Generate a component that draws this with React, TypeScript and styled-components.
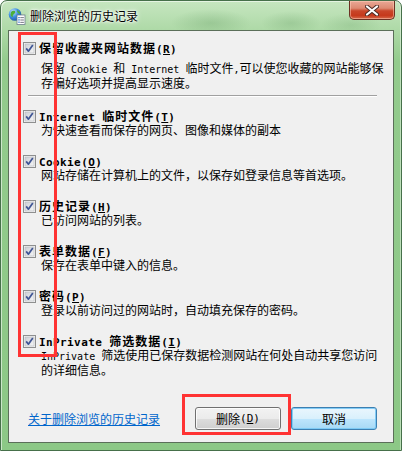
import React from "react";
import styled, { createGlobalStyle } from "styled-components";

const GlobalStyle = createGlobalStyle`
  html, body { margin: 0; padding: 0; width: 402px; height: 451px; overflow: hidden; background: #fff; }
  body { font-family: "Noto Sans CJK SC", sans-serif; }
  * { box-sizing: border-box; }
`;

const Window = styled.div`
  width: 402px;
  height: 451px;
  display: flex;
  flex-direction: column;
  border: 1px solid #46704a;
  border-radius: 7px 7px 0 0;
  background:
    radial-gradient(ellipse 40px 14px at 210px 22px, rgba(80, 140, 80, 0.25), transparent),
    radial-gradient(ellipse 30px 12px at 290px 22px, rgba(80, 140, 80, 0.22), transparent),
    radial-gradient(ellipse 30px 12px at 350px 24px, rgba(80, 140, 80, 0.18), transparent),
    linear-gradient(to bottom, #c6e6c0 0px, #add9a6 30px, #93cb8d 60px, #8cc886 100%);
  box-shadow: inset 1px 1px 0 rgba(255, 255, 255, 0.55), inset -1px 0 0 rgba(255, 255, 255, 0.4);
`;

const TitleBar = styled.div`
  height: 29px;
  display: flex;
  align-items: flex-start;
  padding-left: 7px;
`;

const TitleIcon = styled.svg`
  width: 18px;
  height: 18px;
  margin-top: 6px;
  flex: none;
`;

const TitleText = styled.span`
  margin-left: 4px;
  margin-top: 7px;
  font-size: 12px;
  line-height: 15px;
  color: #000;
  text-shadow: 0 0 6px #fff, 0 0 3px #fff, 0 0 2px #fff;
`;

const CloseButton = styled.div`
  margin-left: auto;
  margin-right: 6px;
  width: 46px;
  height: 19px;
  border: 1px solid #6b3123;
  border-top: none;
  border-radius: 0 0 5px 5px;
  background: linear-gradient(to bottom, #e9a896 0%, #dd8a72 40%, #c9462a 55%, #c6391c 80%, #d5694a 100%);
  box-shadow: inset 0 0 0 1px rgba(255, 210, 190, 0.5);
  display: flex;
  align-items: center;
  justify-content: center;
`;

const Client = styled.div`
  position: relative;
  flex: 1;
  margin: 0 7px 7px 7px;
  border: 1px solid #5b6f59;
  background: #f0f0f0;
  display: flex;
  flex-direction: column;
  padding: 11px 16px 12px 14px;
  color: #000;
  font-size: 12px;
`;

const Item = styled.div<{ $gap?: number }>`
  display: flex;
  flex-direction: column;
  gap: ${(p) => p.$gap ?? 0}px;
`;

const Header = styled.div`
  display: flex;
  align-items: center;
  height: 13px;
`;

const HeaderText = styled.span`
  margin-left: 3px;
  font-weight: bold;
  font-size: 12px;
  line-height: 13px;
  letter-spacing: 1px;
  white-space: nowrap;
`;

const HeaderLatin = styled.span`
  font-family: "DejaVu Sans Mono", monospace;
  font-weight: bold;
  font-size: 11px;
  letter-spacing: 0.4px;
`;

const Desc = styled.div`
  padding-left: 18px;
  font-size: 12px;
  line-height: 13px;
  white-space: nowrap;
`;

const Latin = styled.span`
  font-family: "DejaVu Sans Mono", monospace;
  font-size: 10px;
`;

const Separator = styled.div`
  margin: 6px 0 13px 5px;
  height: 2px;
  border-top: 1px solid #a0a0a0;
  border-bottom: 1px solid #ffffff;
`;

const List = styled.div`
  display: flex;
  flex-direction: column;
  gap: 19px;
`;

const Footer = styled.div`
  margin-top: auto;
  display: flex;
  align-items: center;
  padding-left: 5px;
`;

const Link = styled.a`
  color: #0066cc;
  text-decoration: underline;
  font-size: 12px;
  line-height: 13px;
  cursor: pointer;
`;

const Buttons = styled.div`
  margin-left: auto;
  display: flex;
  gap: 10px;
`;

const Button = styled.div<{ $default?: boolean }>`
  width: 86px;
  height: 23px;
  border-radius: 3px;
  display: flex;
  align-items: center;
  justify-content: center;
  font-size: 12px;
  line-height: 13px;
  border: 1px solid ${(p) => (p.$default ? "#3c7fb1" : "#707070")};
  background: ${(p) =>
    p.$default
      ? "linear-gradient(to bottom, #eaf6fd 0%, #d9f0fc 50%, #bee6fd 51%, #a7d9f5 100%)"
      : "linear-gradient(to bottom, #f2f2f2 0%, #ebebeb 50%, #dddddd 51%, #cfcfcf 100%)"};
  box-shadow: inset 0 0 0 1px ${(p) => (p.$default ? "rgba(120, 200, 245, 0.9)" : "rgba(255,255,255,0.8)")};
`;

const Annotation = styled.div<{ $l: number; $t: number; $w: number; $h: number }>`
  position: absolute;
  left: ${(p) => p.$l}px;
  top: ${(p) => p.$t}px;
  width: ${(p) => p.$w}px;
  height: ${(p) => p.$h}px;
  border: 3px solid #ff3333;
  pointer-events: none;
`;

const CheckBox = () => (
  <svg width="13" height="13" viewBox="0 0 13 13" style={{ flex: "none" }}>
    <defs>
      <linearGradient id="cbIn" x1="0" y1="0" x2="1" y2="1">
        <stop offset="0" stopColor="#cbcfd5" />
        <stop offset="1" stopColor="#f6f6f6" />
      </linearGradient>
    </defs>
    <rect x="0.5" y="0.5" width="12" height="12" fill="#f4f4f4" stroke="#8e8f8f" />
    <rect x="2" y="2" width="9" height="9" fill="url(#cbIn)" stroke="#b5b9bf" strokeWidth="0.6" />
    <path d="M3.2 6.4 L5.4 9.2 L9.8 2.9" fill="none" stroke="#3f5595" strokeWidth="1.7" strokeLinejoin="round" />
  </svg>
);

const Key = ({ k }: { k: string }) => (
  <>
    (<u>{k}</u>)
  </>
);

export default function App() {
  return (
    <>
      <GlobalStyle />
      <Window>
        <TitleBar>
          <TitleIcon viewBox="0 0 18 18">
            <defs>
              <radialGradient id="globe" cx="0.35" cy="0.3" r="0.8">
                <stop offset="0" stopColor="#cfe9ff" />
                <stop offset="0.5" stopColor="#3b8ee0" />
                <stop offset="1" stopColor="#1a4f9a" />
              </radialGradient>
            </defs>
            <circle cx="7" cy="7.5" r="6.3" fill="url(#globe)" />
            <path d="M3 5 Q5 3 7 4 Q8 6 6 7 Q4 8 5 10 Q3 10 2.5 8 Z" fill="#4caf3a" />
            <path d="M9 3 Q11.5 4 12.5 6.5 Q11 7 10 6 Q9 5 9 3 Z" fill="#4caf3a" />
            <rect x="9" y="8" width="8" height="9.5" fill="#fff" stroke="#6a7b8c" strokeWidth="0.8" />
            <rect x="10.3" y="10" width="1.4" height="1.2" fill="#2a6fc9" />
            <rect x="12.3" y="10.3" width="3.6" height="0.8" fill="#556" />
            <rect x="10.3" y="12.3" width="1.4" height="1.2" fill="#2a6fc9" />
            <rect x="12.3" y="12.6" width="3.6" height="0.8" fill="#556" />
            <rect x="10.3" y="14.6" width="1.4" height="1.2" fill="#2a6fc9" />
            <rect x="12.3" y="14.9" width="3.6" height="0.8" fill="#556" />
          </TitleIcon>
          <TitleText>删除浏览的历史记录</TitleText>
          <CloseButton>
            <svg width="14" height="11" viewBox="0 0 14 11">
              <path d="M2 1.5 L12 9.5 M12 1.5 L2 9.5" stroke="#4a2a24" strokeWidth="4" strokeLinecap="round" />
              <path d="M2 1.5 L12 9.5 M12 1.5 L2 9.5" stroke="#ffffff" strokeWidth="2.2" strokeLinecap="round" />
            </svg>
          </CloseButton>
        </TitleBar>
        <Client>
          <Item $gap={6}>
            <Header>
              <CheckBox />
              <HeaderText>
                保留收藏夹网站数据<HeaderLatin><Key k="R" /></HeaderLatin>
              </HeaderText>
            </Header>
            <Desc>
              保留<Latin> Cookie </Latin>和<Latin> Internet </Latin>临时文件<Latin>,</Latin>可以使您收藏的网站能够保
              <br />
              存偏好选项并提高显示速度。
            </Desc>
          </Item>
          <Separator />
          <List>
            <Item>
              <Header>
                <CheckBox />
                <HeaderText>
                  <HeaderLatin>Internet </HeaderLatin>临时文件<HeaderLatin><Key k="T" /></HeaderLatin>
                </HeaderText>
              </Header>
              <Desc>为快速查看而保存的网页、图像和媒体的副本</Desc>
            </Item>
            <Item>
              <Header>
                <CheckBox />
                <HeaderText>
                  <HeaderLatin>Cookie<Key k="O" /></HeaderLatin>
                </HeaderText>
              </Header>
              <Desc>网站存储在计算机上的文件，以保存如登录信息等首选项。</Desc>
            </Item>
            <Item>
              <Header>
                <CheckBox />
                <HeaderText>
                  历史记录<HeaderLatin><Key k="H" /></HeaderLatin>
                </HeaderText>
              </Header>
              <Desc>已访问网站的列表。</Desc>
            </Item>
            <Item>
              <Header>
                <CheckBox />
                <HeaderText>
                  表单数据<HeaderLatin><Key k="F" /></HeaderLatin>
                </HeaderText>
              </Header>
              <Desc>保存在表单中键入的信息。</Desc>
            </Item>
            <Item>
              <Header>
                <CheckBox />
                <HeaderText>
                  密码<HeaderLatin><Key k="P" /></HeaderLatin>
                </HeaderText>
              </Header>
              <Desc>登录以前访问过的网站时，自动填充保存的密码。</Desc>
            </Item>
            <Item>
              <Header>
                <CheckBox />
                <HeaderText>
                  <HeaderLatin>InPrivate </HeaderLatin>筛选数据<HeaderLatin><Key k="I" /></HeaderLatin>
                </HeaderText>
              </Header>
              <Desc>
                <Latin>InPrivate </Latin>筛选使用已保存数据检测网站在何处自动共享您访问
                <br />
                的详细信息。
              </Desc>
            </Item>
          </List>
          <Footer>
            <Link>关于删除浏览的历史记录</Link>
            <Buttons>
              <Button>
                删除<Latin style={{ fontSize: 11 }}>(<u>D</u>)</Latin>
              </Button>
              <Button $default>取消</Button>
            </Buttons>
          </Footer>
          <Annotation $l={9} $t={1} $w={39} $h={325} />
          <Annotation $l={173} $t={363} $w={109} $h={41} />
        </Client>
      </Window>
    </>
  );
}
